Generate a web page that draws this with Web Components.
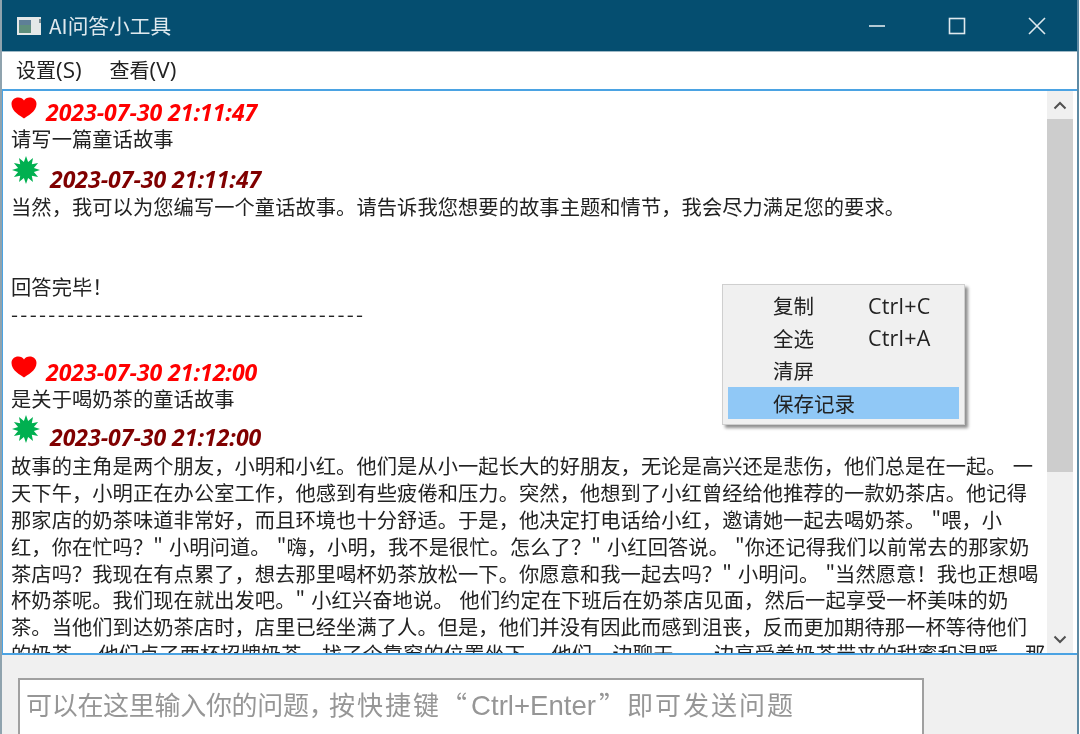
<!DOCTYPE html>
<html lang="zh">
<head>
<meta charset="utf-8">
<title>AI问答小工具</title>
<style>
  html, body { margin: 0; height: 100%; overflow: hidden; }
  body {
    font-family: "Noto Sans CJK SC", "Noto Sans", sans-serif;
    background: linear-gradient(to left, #fff 0 1px, #5f8aa3 1px 3px, transparent 3px), #8fa3ae;
  }
  .latin { font-family: "Open Sans", sans-serif; font-size: 22.5px; }
  .dash { letter-spacing: 2.3px; }
  .tight { letter-spacing: -0.3px; }
  .comma { letter-spacing: -5.700px; }
  .wide { letter-spacing: 2px; }
  .typed { font-family: "Liberation Sans", sans-serif; font-size: 27.6px; margin: 0 3px 0 2px; }
</style>
</head>
<body>
<app-window>
  <title-bar slot="title">AI问答小工具</title-bar>
  <menu-bar slot="menu">
    <span>设置<span class="latin">(S)</span></span>
    <span>查看<span class="latin">(V)</span></span>
  </menu-bar>
  <chat-view slot="chat">
    <chat-stamp kind="user" lift="-1">2023-07-30 21:11:47</chat-stamp>
    <chat-line>请写一篇童话故事</chat-line>
    <chat-stamp kind="bot" height="41" lift="0">2023-07-30 21:11:47</chat-stamp>
    <chat-line>当然，我可以为您编写一个童话故事。请告诉我您想要的故事主题和情节，我会尽力满足您的要求。</chat-line>
    <chat-line></chat-line>
    <chat-line></chat-line>
    <chat-line>回答完毕！</chat-line>
    <chat-line><span class="dash">--------------------------------------</span></chat-line>
    <chat-line></chat-line>
    <chat-stamp kind="user" height="31" lift="-1" icon-top="1">2023-07-30 21:12:00</chat-stamp>
    <chat-line>是关于喝奶茶的童话故事</chat-line>
    <chat-stamp kind="bot" height="41" lift="1" icon-top="3">2023-07-30 21:12:00</chat-stamp>
    <chat-line>故事的主角是两个朋友，小明和小红。他们是从小一起长大的好朋友，无论是高兴还是悲伤，他们总是在一起。 一</chat-line>
    <chat-line>天下午，小明正在办公室工作，他感到有些疲倦和压力。突然，他想到了小红曾经给他推荐的一款奶茶店。他记得</chat-line>
    <chat-line>那家店的奶茶味道非常好，而且环境也十分舒适。于是，他决定打电话给小红，邀请她一起去喝奶茶。 "喂，小</chat-line>
    <chat-line>红，你在忙吗？" 小明问道。 "嗨，小明，我不是很忙。怎么了？" 小红回答说。 "你还记得我们以前常去的那家奶</chat-line>
    <chat-line>茶店吗？我现在有点累了，想去那里喝杯奶茶放松一下。你愿意和我一起去吗？" 小明问。 "当然愿意！我也正想喝</chat-line>
    <chat-line>杯奶茶呢。我们现在就出发吧。" 小红兴奋地说。 他们约定在下班后在奶茶店见面，然后一起享受一杯美味的奶</chat-line>
    <chat-line>茶。当他们到达奶茶店时，店里已经坐满了人。但是，他们并没有因此而感到沮丧，反而更加期待那一杯等待他们</chat-line>
    <chat-line>的奶茶。 他们点了两杯招牌奶茶，找了个靠窗的位置坐下。 他们一边聊天，一边享受着奶茶带来的甜蜜和温暖。 那</chat-line>
  </chat-view>
  <input-box slot="input"><span class="tight">可以在这里输入你的问题</span><span class="comma">，</span><span class="wide">按快捷键“</span><span class="typed">Ctrl+Enter</span><span class="wide">”即可发送问题</span></input-box>
  <context-menu slot="popup">
    <menu-row shortcut="Ctrl+C">复制</menu-row>
    <menu-row shortcut="Ctrl+A">全选</menu-row>
    <menu-row>清屏</menu-row>
    <menu-row active>保存记录</menu-row>
  </context-menu>
</app-window>

<script>
const CJK = '"Noto Sans CJK SC", "Noto Sans", sans-serif';

class AppWindow extends HTMLElement {
  constructor() {
    super();
    this.attachShadow({ mode: 'open' });
    this.shadowRoot.innerHTML = `
      <style>
        :host {
          display: flex;
          flex-direction: column;
          position: relative;
          box-sizing: border-box;
          height: 734px;
          margin: 0 3px 0 2px;
          background: #f0f0f0;
          overflow: hidden;
          font-family: ${CJK};
          filter: blur(0.3px);
        }
        .popup { position: absolute; left: 720px; top: 284px; }
      </style>
      <slot name="title"></slot>
      <slot name="menu"></slot>
      <slot name="chat"></slot>
      <slot name="input"></slot>
      <div class="popup"><slot name="popup"></slot></div>
    `;
  }
}

class TitleBar extends HTMLElement {
  constructor() {
    super();
    this.attachShadow({ mode: 'open' });
    this.shadowRoot.innerHTML = `
      <style>
        :host {
          display: flex;
          align-items: center;
          flex: none;
          height: 51px;
          background: #054e70;
          color: #dfe9ee;
          font-size: 20.7px;
        }
        .icon { margin: 0 7px 0 14px; flex: none; }
        .title { flex: 1; padding-bottom: 1px; }
        .btn { width: 80px; height: 51px; flex: none; display: flex; align-items: center; justify-content: center; }
        .btn svg { display: block; }
      </style>
      <svg class="icon" width="26" height="20" viewBox="0 0 26 20">
        <rect x="1" y="1" width="24" height="18" fill="#e4e8e8"/>
        <rect x="3" y="4" width="12" height="13" fill="#5f8f7c"/>
        <rect x="3" y="4" width="12" height="5" fill="#5e7f97"/>
        <rect x="23" y="3" width="2" height="4" fill="#7a8a90"/>
      </svg>
      <span class="title"><slot></slot></span>
      <div class="btn"><svg width="18" height="18" viewBox="0 0 18 18"><path d="M1 9h16" stroke="#dfe9ee" stroke-width="1.6"/></svg></div>
      <div class="btn"><svg width="18" height="18" viewBox="0 0 18 18"><rect x="1.500" y="1.500" width="15" height="15" fill="none" stroke="#dfe9ee" stroke-width="1.6"/></svg></div>
      <div class="btn"><svg width="18" height="18" viewBox="0 0 18 18"><path d="M1 1l16 16M17 1L1 17" stroke="#dfe9ee" stroke-width="1.6"/></svg></div>
    `;
  }
}

class MenuBar extends HTMLElement {
  constructor() {
    super();
    this.attachShadow({ mode: 'open' });
    this.shadowRoot.innerHTML = `
      <style>
        :host {
          display: flex;
          align-items: center;
          flex: none;
          gap: 28px;
          height: 38px;
          padding: 0 0 2px 14px;
          box-sizing: border-box;
          border-top: 1px solid #9fb9c6;
          background: #fff;
          color: #222;
          font-size: 20px;
        }
      </style>
      <slot></slot>
    `;
  }
}

class ChatView extends HTMLElement {
  constructor() {
    super();
    this.attachShadow({ mode: 'open' });
    this.shadowRoot.innerHTML = `
      <style>
        :host {
          display: flex;
          flex: none;
          height: 566px;
          box-sizing: border-box;
          border: 1px solid #4ba3e3;
          border-width: 2px 0 2px 1px;
          background: #fff;
        }
        .text {
          flex: 1;
          min-width: 0;
          overflow: hidden;
          padding: 0 0 0 8px;
          color: #222;
          font-size: 20.25px;
          letter-spacing: 0.07px;
          word-spacing: 1.5px;
        }
        .bar {
          flex: none;
          width: 26px;
          margin-right: 4px;
          display: flex;
          flex-direction: column;
          background: #f0f0f0;
        }
        .arrow { flex: none; height: 27px; display: flex; align-items: center; justify-content: center; }
        .arrow.up { height: 28px; }
        .track { flex: 1; display: flex; flex-direction: column; }
        .thumb { flex: none; height: 353px; background: #cdcdcd; }
      </style>
      <div class="text"><slot></slot></div>
      <div class="bar">
        <div class="arrow up"><svg width="14" height="9" viewBox="0 0 14 9"><path d="M1.500 7.500L7 2l5.500 5.500" fill="none" stroke="#505050" stroke-width="2"/></svg></div>
        <div class="track"><div class="thumb"></div></div>
        <div class="arrow"><svg width="14" height="9" viewBox="0 0 14 9"><path d="M1.500 1.500L7 7l5.500-5.500" fill="none" stroke="#505050" stroke-width="2"/></svg></div>
      </div>
    `;
  }
}

// regular star outline for the answer marker
function burstPoints(cx, cy, outer, inner, spikes) {
  const pts = [];
  for (let i = 0; i < spikes * 2; i++) {
    const r = i % 2 ? inner : outer;
    const a = Math.PI * i / spikes - Math.PI / 2;
    pts.push((cx + r * Math.cos(a)).toFixed(1) + ',' + (cy + r * Math.sin(a)).toFixed(1));
  }
  return pts.join(' ');
}

class ChatStamp extends HTMLElement {
  constructor() {
    super();
    this.attachShadow({ mode: 'open' });
    const bot = this.getAttribute('kind') === 'bot';
    const height = this.getAttribute('height') || 35;
    const lift = this.getAttribute('lift') || 0;
    const iconTop = this.getAttribute('icon-top') || (bot ? 3 : 6);
    const heart = `<svg width="26" height="22" viewBox="0 0 26 22"><path d="M13 21.500C10 19 0.500 15 0.500 7C0.500 3 3.500 0.500 7.300 0.500C9.800 0.500 12 1.800 13 3.600C14 1.800 16.200 0.500 18.700 0.500C22.500 0.500 25.500 3 25.500 7C25.500 15 16 19 13 21.500Z" fill="#ff0000"/></svg>`;
    const burst = `<svg width="28" height="28" viewBox="0 0 28 28"><polygon points="${burstPoints(14, 14, 14, 8.2, 12)}" fill="#00b050"/></svg>`;
    this.shadowRoot.innerHTML = `
      <style>
        :host { display: flex; align-items: flex-end; height: ${height}px; }
        svg { flex: none; align-self: flex-start; margin: ${iconTop}px ${bot ? '10px 0 1px' : '9px 0 0'}; }
        .date {
          margin-bottom: ${lift}px;
          font: italic bold 23px/30px "Open Sans", "Noto Sans", sans-serif;
          letter-spacing: 0;
          word-spacing: 0;
          color: ${bot ? '#800000' : '#ff0000'};
        }
      </style>
      ${bot ? burst : heart}
      <span class="date"><slot></slot></span>
    `;
  }
}

class ChatLine extends HTMLElement {
  constructor() {
    super();
    this.attachShadow({ mode: 'open' });
    this.shadowRoot.innerHTML = `
      <style>
        :host { display: block; height: 26.8px; line-height: 26.8px; }
        span { white-space: pre; }
      </style>
      <span><slot></slot></span>
    `;
  }
}

class InputBox extends HTMLElement {
  constructor() {
    super();
    this.attachShadow({ mode: 'open' });
    this.shadowRoot.innerHTML = `
      <style>
        :host { display: block; flex: 1; padding: 23px 0 0 16px; min-height: 0; }
        .field {
          box-sizing: border-box;
          width: 906px;
          height: 60px;
          padding: 6px 0 0 6px;
          background: #fff;
          border: 1px solid #a0a0a0;
          border-width: 2px 2px 0 2px;
          color: #969696;
          font-size: 26px;
          line-height: 36px;
          white-space: nowrap;
        }
      </style>
      <div class="field"><slot></slot></div>
    `;
  }
}

class ContextMenu extends HTMLElement {
  constructor() {
    super();
    this.attachShadow({ mode: 'open' });
    this.shadowRoot.innerHTML = `
      <style>
        :host {
          display: block;
          box-sizing: border-box;
          width: 243px;
          padding: 4px 5px 5px;
          background: #f0f0f0;
          border: 1px solid #cfcfcf;
          box-shadow: 3px 3px 3px #8f8f8f;
        }
      </style>
      <slot></slot>
    `;
  }
}

class MenuRow extends HTMLElement {
  constructor() {
    super();
    this.attachShadow({ mode: 'open' });
    this.shadowRoot.innerHTML = `
      <style>
        :host {
          display: flex;
          align-items: center;
          height: 32.5px;
          padding-left: 45px;
          color: #222;
          font-size: 20.5px;
        }
        :host([active]) { background: #90c8f6; }
        .label { flex: none; width: 95px; }
        .keys { font-family: "Open Sans", sans-serif; font-size: 21.5px; letter-spacing: 0.2px; }
      </style>
      <span class="label"><slot></slot></span>
      <span class="keys">${this.getAttribute('shortcut') || ''}</span>
    `;
  }
}

customElements.define('app-window', AppWindow);
customElements.define('title-bar', TitleBar);
customElements.define('menu-bar', MenuBar);
customElements.define('chat-view', ChatView);
customElements.define('chat-stamp', ChatStamp);
customElements.define('chat-line', ChatLine);
customElements.define('input-box', InputBox);
customElements.define('context-menu', ContextMenu);
customElements.define('menu-row', MenuRow);
</script>
</body>
</html>
